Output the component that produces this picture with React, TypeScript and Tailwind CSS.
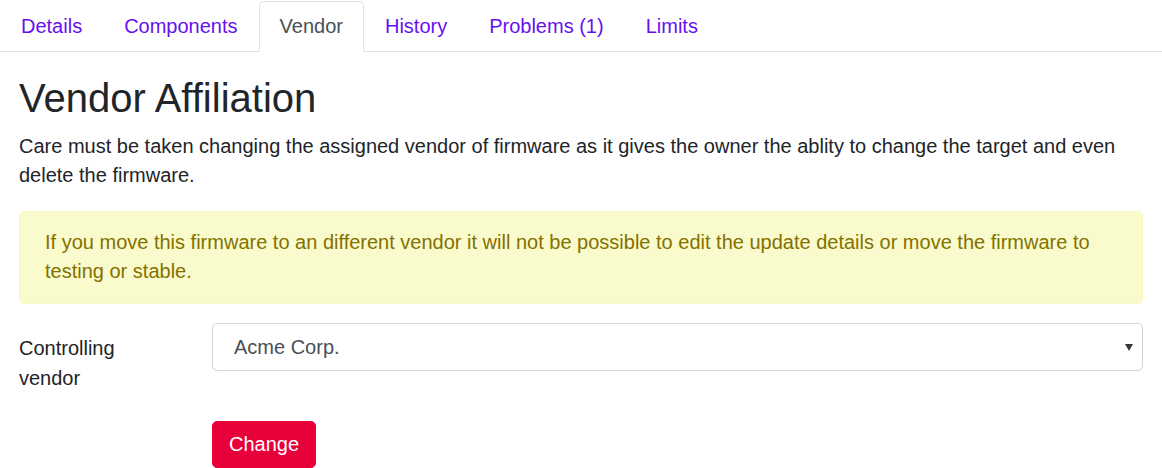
import React from "react";

const tabs = ["Details", "Components", "Vendor", "History", "Problems (1)", "Limits"];

export default function App() {
  return (
    <div className="bg-white text-[#212529] text-[20px] leading-[29px]" style={{ fontFamily: '"Liberation Sans", Arial, sans-serif' }}>
      <ul className="flex border-b border-[#dee2e6] pt-px">
        {tabs.map((t) => {
          const active = t === "Vendor";
          return (
            <li key={t} className="-mb-px">
              <span
                className={
                  active
                    ? "block px-[20px] py-[10px] border border-[#dee2e6] border-b-white rounded-t-[5px] bg-white text-[#495057]"
                    : "block px-[20px] py-[10px] border border-transparent text-[#6610f2]"
                }
              >
                {t}
              </span>
            </li>
          );
        })}
      </ul>
      <div className="px-[19px]">
        <h2 className="text-[40px] leading-[48px] mt-[22px] mb-[10px] font-normal">Vendor Affiliation</h2>
        <p className="mb-[21px]">
          Care must be taken changing the assigned vendor of firmware as it gives the owner the ablity to change the target and even delete the firmware.
        </p>
        <div className="bg-[#f9fbcc] border border-[#f7f9c4] text-[#857000] rounded-[5px] px-[25px] pt-[16px] pb-[17px] mb-[19px]">
          If you move this firmware to an different vendor it will not be possible to edit the update details or move the firmware to testing or stable.
        </div>
        <div className="flex">
          <div className="w-[193px] shrink-0 pt-[10px] leading-[30px]">
            Controlling
            <br />
            vendor
          </div>
          <div className="flex-1">
            <div className="relative h-[48px] border border-[#ced4da] rounded-[5px] bg-white flex items-center pl-[21px] text-[#495057]">
              Acme Corp.
              <svg className="absolute right-[9px] top-[20px]" width="8" height="7" viewBox="0 0 8 7">
                <path d="M0 0h8L4 7z" fill="#343a40" />
              </svg>
            </div>
            <button className="mt-[50px] h-[47px] px-[16px] bg-[#e8003a] text-white rounded-[5px] border border-[#e8003a]">Change</button>
          </div>
        </div>
      </div>
    </div>
  );
}
